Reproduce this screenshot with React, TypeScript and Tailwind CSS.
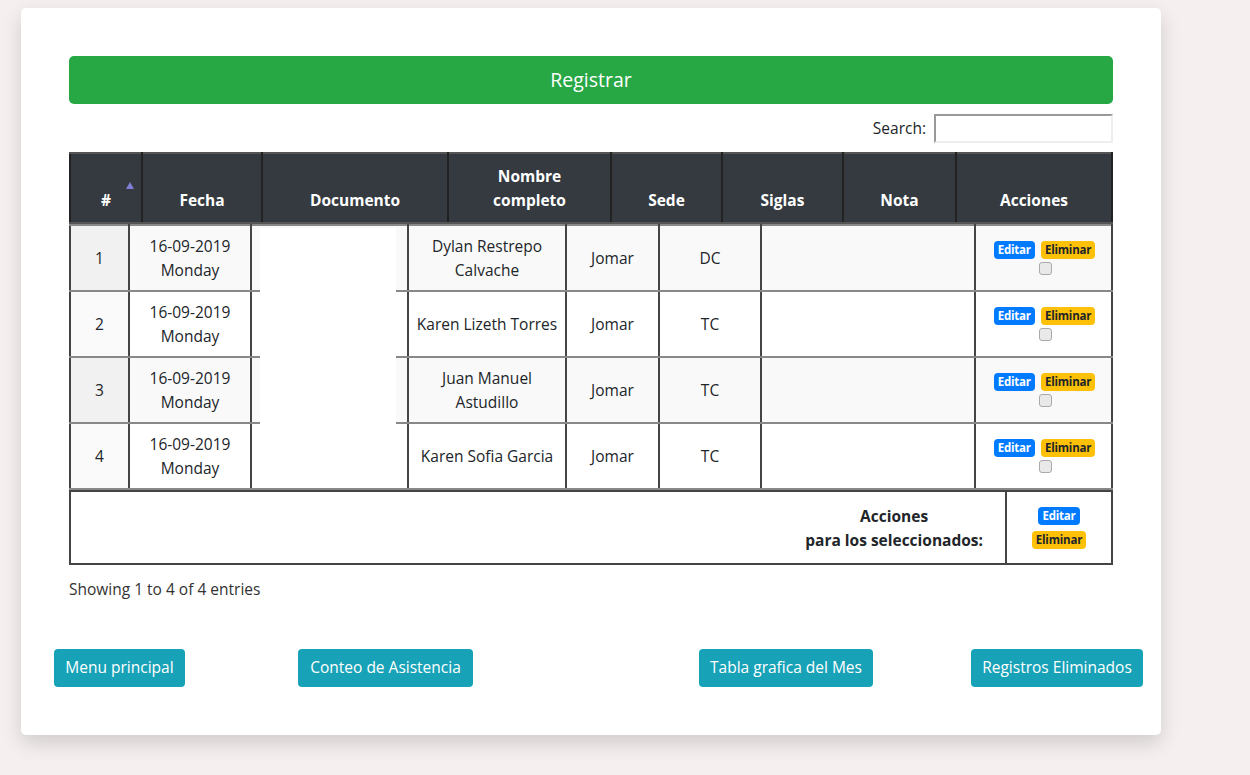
import { useState } from 'react';

const FONT = { fontFamily: '"Open Sans", "Noto Sans", Arial, sans-serif' };

const filas = [
  { n: 1, fecha: '16-09-2019', dia: 'Monday', nombre: ['Dylan Restrepo', 'Calvache'], sede: 'Jomar', siglas: 'DC' },
  { n: 2, fecha: '16-09-2019', dia: 'Monday', nombre: ['Karen Lizeth Torres'], sede: 'Jomar', siglas: 'TC' },
  { n: 3, fecha: '16-09-2019', dia: 'Monday', nombre: ['Juan Manuel', 'Astudillo'], sede: 'Jomar', siglas: 'TC' },
  { n: 4, fecha: '16-09-2019', dia: 'Monday', nombre: ['Karen Sofia Garcia'], sede: 'Jomar', siglas: 'TC' },
];

function Badge({ tipo }: { tipo: 'editar' | 'eliminar' }) {
  return tipo === 'editar' ? (
    <span className="inline-block rounded-[4px] bg-[#007bff] px-[4px] text-[11.5px] leading-[18px] font-bold tracking-[-0.2px] text-white">Editar</span>
  ) : (
    <span className="inline-block rounded-[4px] bg-[#ffc107] px-[4px] text-[11.5px] leading-[18px] font-bold tracking-[-0.2px] text-[#212529]">Eliminar</span>
  );
}

const btn = 'h-[38px] shrink-0 rounded-[4px] bg-[#17a2b8] text-[15.5px] text-white';

export default function App() {
  const [marcados, setMarcados] = useState<Record<number, boolean>>({});

  return (
    <div className="min-h-[775px] bg-[#f5efef] pl-[21px] pt-[8px] text-[#212529]" style={FONT}>
      <div className="w-[1140px] rounded-[5px] bg-white px-[48px] pt-[48px] pb-[48px] shadow-[0_8px_20px_rgba(0,0,0,0.15)]">
        <button className="h-[48px] w-[1044px] rounded-[5px] bg-[#28a745] text-[19.5px] text-white">Registrar</button>

        <div className="mt-[10px] flex items-center justify-end gap-[8px] text-[15.5px]">
          <span>Search:</span>
          <input className="h-[29px] w-[179px] border-2 border-t-[#999] border-l-[#999] border-r-[#eee] border-b-[#eee] outline-none" />
        </div>

        {/* encabezado */}
        <table className="mt-[9px] w-[1044px] table-fixed border-collapse text-[15.5px] font-bold text-white">
          <colgroup>
            <col className="w-[72px]" />
            <col className="w-[120px]" />
            <col className="w-[186px]" />
            <col className="w-[163px]" />
            <col className="w-[111px]" />
            <col className="w-[121px]" />
            <col className="w-[113px]" />
            <col />
          </colgroup>
          <thead>
            <tr className="h-[70px] bg-[#343a40]">
              {['#', 'Fecha', 'Documento', 'Nombre completo', 'Sede', 'Siglas', 'Nota', 'Acciones'].map((h, i) => (
                <th key={h} className="relative border-2 border-x-[#222] border-t-[#555] border-b-[#555] px-2 pb-[10px] align-bottom leading-[24px]">
                  {i === 3 ? (
                    <>
                      Nombre
                      <br />
                      completo
                    </>
                  ) : (
                    h
                  )}
                  {i === 0 && (
                    <svg className="absolute top-[28px] right-[7px]" width="8" height="7" viewBox="0 0 8 7">
                      <path d="M4 0 L8 7 L0 7 Z" fill="#7f7fd5" />
                    </svg>
                  )}
                </th>
              ))}
            </tr>
          </thead>
        </table>

        {/* cuerpo */}
        <div className="relative">
          <table className="w-[1044px] table-fixed border-collapse text-[15.5px]">
            <colgroup>
              <col className="w-[59px]" />
              <col className="w-[122px]" />
              <col className="w-[157px]" />
              <col className="w-[158px]" />
              <col className="w-[93px]" />
              <col className="w-[102px]" />
              <col className="w-[214px]" />
              <col />
            </colgroup>
            <tbody>
              {filas.map((f) => {
                const par = f.n % 2 === 0;
                const bg = par ? 'bg-white' : 'bg-[#f9f9f9]';
                const cell = 'border-2 border-x-[#444] border-y-[#888] text-center align-middle leading-[24px]';
                return (
                  <tr key={f.n} className="h-[66px]">
                    <td className={`${cell} ${par ? 'bg-[#fafafa]' : 'bg-[#f1f1f1]'}`}>{f.n}</td>
                    <td className={`${cell} ${bg}`}>
                      {f.fecha}
                      <br />
                      {f.dia}
                    </td>
                    <td className={`${cell} ${bg}`} />
                    <td className={`${cell} ${bg}`}>
                      {f.nombre.map((l, i) => (
                        <div key={i}>{l}</div>
                      ))}
                    </td>
                    <td className={`${cell} ${bg}`}>{f.sede}</td>
                    <td className={`${cell} ${bg}`}>{f.siglas}</td>
                    <td className={`${cell} ${bg}`} />
                    <td className={`${cell} ${bg}`}>
                      <div className="flex justify-center gap-[6px] pl-[2px]">
                        <Badge tipo="editar" />
                        <Badge tipo="eliminar" />
                      </div>
                      <div className="flex justify-center pl-[4px] leading-none">
                        <input
                          type="checkbox"
                          checked={!!marcados[f.n]}
                          onChange={() => setMarcados({ ...marcados, [f.n]: !marcados[f.n] })}
                          className="mt-[3px] h-[13px] w-[13px] appearance-none rounded-[3px] border border-[#aaa] bg-[#e9e9e9] checked:bg-[#007bff]"
                        />
                      </div>
                    </td>
                  </tr>
                );
              })}
            </tbody>
          </table>
          {/* documento oculto */}
          <div className="absolute top-[4px] left-[191px] h-[196px] w-[136px] bg-white" />
        </div>

        {/* pie */}
        <table className="w-[1044px] table-fixed border-collapse text-[15.5px]">
          <colgroup>
            <col />
            <col className="w-[106px]" />
          </colgroup>
          <tbody>
            <tr className="h-[73px]">
              <td className="border-2 border-[#444] pr-[22px] text-right align-middle leading-[24px] font-bold">
                <div className="inline-block text-center">
                  Acciones
                  <br />
                  para los seleccionados:
                </div>
              </td>
              <td className="border-2 border-[#444] text-center align-middle">
                <div className="flex flex-col items-center gap-[6px]">
                  <Badge tipo="editar" />
                  <Badge tipo="eliminar" />
                </div>
              </td>
            </tr>
          </tbody>
        </table>

        <p className="mt-[12px] text-[15.5px] leading-[24px] text-[#333]">Showing 1 to 4 of 4 entries</p>

        <div className="-ml-[15px] mt-[48px] flex items-center">
          <button className={`${btn} w-[131px]`}>Menu principal</button>
          <button className={`${btn} ml-[113px] w-[175px]`}>Conteo de Asistencia</button>
          <button className={`${btn} ml-[226px] w-[174px]`}>Tabla grafica del Mes</button>
          <button className={`${btn} ml-[98px] w-[172px]`}>Registros Eliminados</button>
        </div>
      </div>
    </div>
  );
}
